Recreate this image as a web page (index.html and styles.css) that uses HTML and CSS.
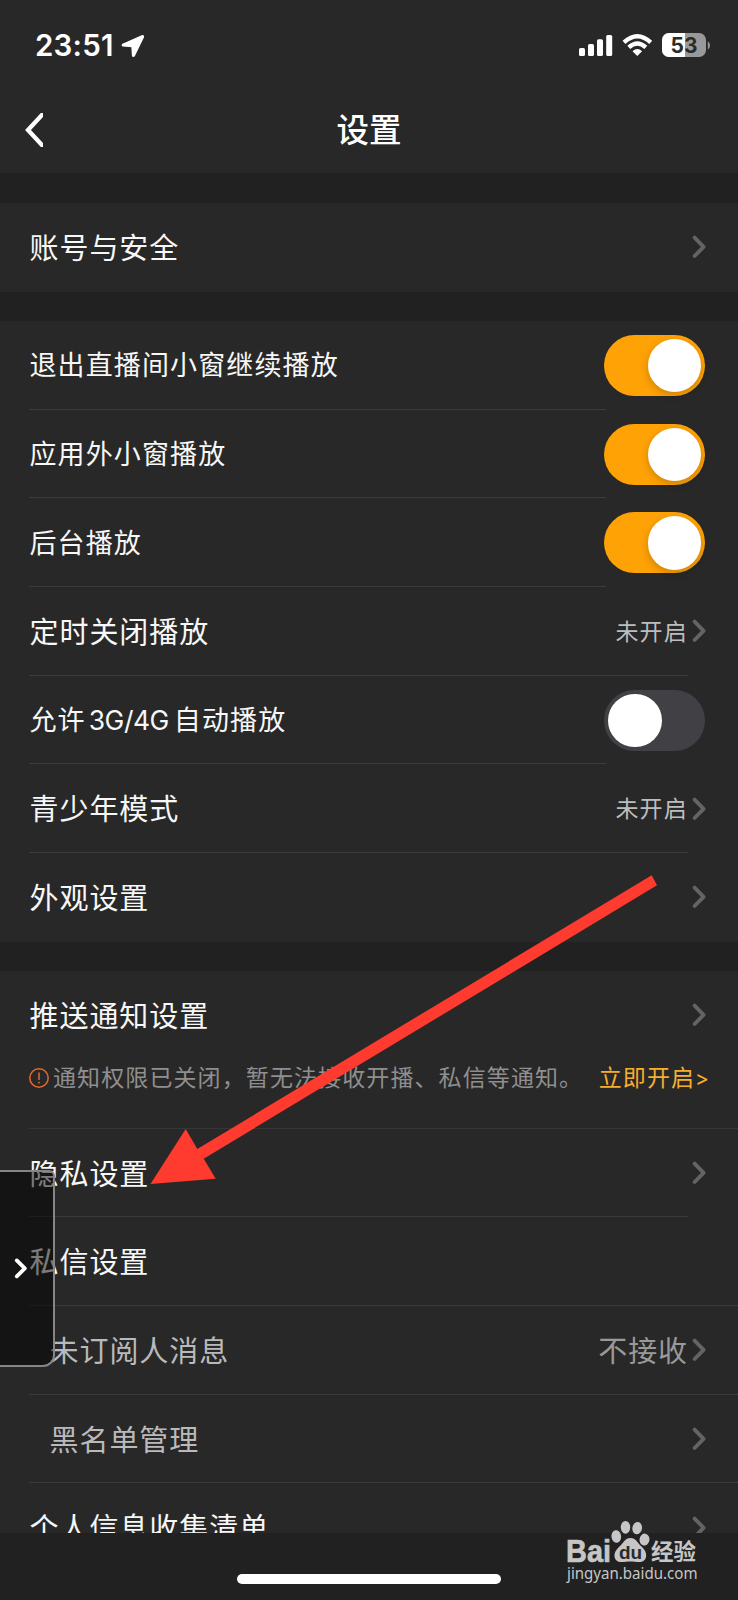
FILE: index.html
```html
<!DOCTYPE html>
<html lang="zh-CN">
<head>
<meta charset="utf-8">
<title>设置</title>
<link rel="stylesheet" href="styles.css">
</head>
<body>
<svg class="defs" width="0" height="0">
  <symbol id="chev" viewBox="0 0 14 24"><path d="M2.6 2.6 11.6 11.800 2.6 21" fill="none" stroke="#646467" stroke-width="3.8" stroke-linecap="round" stroke-linejoin="round"/></symbol>
</svg>
<div class="screen">
  <header class="top">
    <div class="status">
      <span class="time">23:51</span>
      <svg class="loc" width="24" height="24" viewBox="0 0 24 24"><path d="M21 1.800 1.800 10.300Q.8 11.400 2 11.900L11 12.500 11.600 21.600Q12.2 22.900 13.300 21.800L22.400 3Q22.400 1.300 21 1.800Z" fill="#fff" stroke="#fff" stroke-width="1.400" stroke-linejoin="round"/></svg>
      <svg class="signals" width="134" height="26" viewBox="578 32 134 26">
        <g fill="#fff">
          <rect x="579" y="48" width="6" height="8" rx="1.6"/>
          <rect x="588" y="44" width="6" height="12" rx="1.6"/>
          <rect x="597" y="39.3" width="6" height="16.7" rx="1.6"/>
          <rect x="606.2" y="35" width="6" height="21" rx="1.6"/>
          <path d="M637.3 56 632.5 51.3Q637.3 46.900 642.1 51.3Z"/>
        </g>
        <g fill="none" stroke="#fff" stroke-width="4.3">
          <path d="M624 42.400Q637.3 30 650.7 42.400"/>
          <path d="M628.8 47.3Q637.3 39.6 645.8 47.3"/>
        </g>
        <rect x="662" y="33" width="44" height="24" rx="7" fill="#999"/>
        <path d="M685 33H669a7 7 0 0 0-7 7v10a7 7 0 0 0 7 7h16Z" fill="#fff"/>
        <path d="M707.8 41.2Q710 42.5 710 45.3T707.8 49.5Z" fill="#999"/>
        <text class="pct" x="684" y="52.800" text-anchor="middle">53</text>
      </svg>
    </div>
    <div class="nav">
      <svg class="back" width="18" height="34" viewBox="0 0 18 34"><path d="M20-1.300 3 17 20 35.300" fill="none" stroke="#fff" stroke-width="4.300"/></svg>
      <h1 class="title">设置</h1>
    </div>
  </header>

  <main class="list">
    <section class="group first">
      <div class="row plain"><span class="name">账号与安全</span><svg class="chev"><use href="#chev"/></svg></div>
    </section>
    <section class="group">
      <div class="row short"><span class="name small">退出直播间小窗继续播放</span><span class="toggle on"><i class="knob"></i></span></div>
      <div class="row short"><span class="name small">应用外小窗播放</span><span class="toggle on"><i class="knob"></i></span></div>
      <div class="row short"><span class="name small">后台播放</span><span class="toggle on"><i class="knob"></i></span></div>
      <div class="row"><span class="name">定时关闭播放</span><span class="value">未开启</span><svg class="chev"><use href="#chev"/></svg></div>
      <div class="row short"><span class="name small">允许<span class="latin">3G/4G</span>自动播放</span><span class="toggle"><i class="knob"></i></span></div>
      <div class="row"><span class="name">青少年模式</span><span class="value">未开启</span><svg class="chev"><use href="#chev"/></svg></div>
      <div class="row plain"><span class="name">外观设置</span><svg class="chev"><use href="#chev"/></svg></div>
    </section>
    <section class="group">
      <div class="row plain"><span class="name">推送通知设置</span><svg class="chev"><use href="#chev"/></svg></div>
      <div class="hint">
        <svg class="warn" width="20" height="20" viewBox="0 0 20 20" fill="none" stroke="#e4692b" stroke-width="1.5"><circle cx="10" cy="10" r="9.2"/><path d="M10 4.5v7.5M10 13.7v1.8"/></svg>
        <span class="note">通知权限已关闭，暂无法接收开播、私信等通知。</span>
        <span class="open">立即开启<b class="gt">&gt;</b></span>
      </div>
      <div class="row"><span class="name">隐私设置</span><svg class="chev"><use href="#chev"/></svg></div>
      <div class="row full"><span class="name">私信设置</span></div>
      <div class="row full"><span class="name sub">未订阅人消息</span><span class="value big">不接收</span><svg class="chev"><use href="#chev"/></svg></div>
      <div class="row full"><span class="name sub">黑名单管理</span><svg class="chev"><use href="#chev"/></svg></div>
      <div class="row plain"><span class="name">个人信息收集清单</span><svg class="chev"><use href="#chev"/></svg></div>
    </section>
  </main>

  <footer class="bottom"><div class="home"></div></footer>

  <div class="drawer"><svg width="14" height="22" viewBox="0 0 14 22"><path d="M2.8 2.400 10.800 10.400 2.8 18.300" fill="none" stroke="#fff" stroke-width="3.8" stroke-linecap="round" stroke-linejoin="round"/></svg></div>

  <svg class="arrow" width="738" height="1600" viewBox="0 0 738 1600"><path d="M651.7 875.3 657 885.3 203.7 1158.7 215.7 1178.7 150.5 1184 185.7 1129 197.3 1149Z" fill="#ff3b30"/></svg>

  <svg class="mark" width="136" height="66" viewBox="564 1520 136 66">
    <g fill="#c6c6c6">
      <text class="bai" x="566" y="1561.500" textLength="45" lengthAdjust="spacingAndGlyphs">Bai</text>
      <ellipse cx="616.3" cy="1536.5" rx="4.8" ry="6.3" transform="rotate(-8 616.3 1536.5)"/>
      <ellipse cx="625.5" cy="1527.3" rx="4.7" ry="6.4"/>
      <ellipse cx="637.2" cy="1528.2" rx="4.8" ry="6.2" transform="rotate(10 637.2 1528.2)"/>
      <ellipse cx="644.5" cy="1539.6" rx="5" ry="6" transform="rotate(8 644.5 1539.6)"/>
      <path d="M630.5 1538C636 1538 637.5 1543 642 1547 646 1550.500 647.500 1556 645 1559.500 642 1563.500 636.500 1561.500 630.500 1561.500S619 1563.500 616 1560C612.800 1556 615 1550.500 619 1547 623.500 1543 625 1538 630.500 1538Z"/>
      <text class="jy" x="651" y="1559.500" textLength="45" lengthAdjust="spacingAndGlyphs">经验</text>
      <text class="url" x="567" y="1579" textLength="130.500" lengthAdjust="spacingAndGlyphs">jingyan.baidu.com</text>
    </g>
    <text class="du" x="630.500" y="1558.500" text-anchor="middle">du</text>
  </svg>
</div>
</body>
</html>
```

FILE: styles.css
```css
* { box-sizing: border-box; }
body { margin: 0; background: #212121; }
.defs { position: absolute; }
.screen {
  position: relative;
  width: 738px;
  height: 1600px;
  overflow: hidden;
  display: flex;
  flex-direction: column;
  background: #212121;
  color: #f7f7f7;
  font-family: "Noto Sans CJK SC", sans-serif;
}
.top { height: 173px; flex: none; background: #282828; }
.status { height: 86px; padding: 32px 26px 0 35px; display: flex; align-items: flex-start; }
.time {
  font: 600 29.500px/27px Inter, sans-serif;
  width: 77px;
  letter-spacing: 0.200px;
  white-space: nowrap;
  color: #fff;
}
.loc { margin: 2px 0 0 9px; }
.signals { margin-left: auto; }
.pct { font: 700 21px Inter, sans-serif; fill: #2b2b2b; }
.nav {
  height: 87px;
  padding-left: 25px;
  display: grid;
  grid-template-columns: 18px 1fr 43px;
  align-items: center;
}
.title {
  margin: 0;
  padding-bottom: 3px;
  text-align: center;
  font-size: 32.500px;
  font-weight: 500;
  line-height: 40px;
  color: #fff;
}
.list { flex: 1; min-height: 0; padding-top: 30px; overflow: hidden; }
.group { background: #282828; margin-bottom: 29.500px; }
.row {
  height: 88.650px;
  padding: 0 30px 0 29px;
  display: flex;
  align-items: center;
  background: linear-gradient(#3b3b3c, #3b3b3c) 29px 100% / 659px 1px no-repeat;
}
.row.short { background-size: 577px 1px; }
.row.full { background-size: 709px 1px; }
.row.plain { background: none; }
.name {
  margin-right: auto;
  padding: 0 0 3px 0.500px;
  font-size: 29px;
  letter-spacing: 0.950px;
  font-weight: 400;
  line-height: 40px;
  white-space: nowrap;
}
.name.small { font-size: 27px; letter-spacing: 1.120px; padding-bottom: 2px; }
.name.sub { padding-left: 20.500px; color: #bababa; }
.latin { font-family: Inter, sans-serif; font-size: 26.500px; letter-spacing: -0.500px; margin: 0 5px 0 3px; }
.value { font-size: 23px; letter-spacing: 1.200px; color: #bdbdbd; margin-right: 4px; padding-bottom: 3px; line-height: 40px; }
.value.big { font-size: 29px; letter-spacing: 0.900px; color: #999; margin-right: 4px; }
.chev { width: 14px; height: 24px; margin-right: 2px; flex: none; }
.toggle {
  width: 101px;
  height: 61px;
  margin-right: 3px;
  padding: 4px;
  border-radius: 31px;
  display: flex;
  background: #414045;
}
.toggle.on { background: #ffa206; justify-content: flex-end; }
.knob { width: 53.500px; height: 53.500px; border-radius: 50%; background: #fff; }
.toggle.on .knob { box-shadow: 0 3px 8px rgba(0, 0, 0, 0.2); }
.hint {
  height: 69px;
  padding: 0 29px 35px 29px;
  display: flex;
  align-items: center;
  font-size: 23px;
  line-height: 34px;
  letter-spacing: 1.100px;
  white-space: nowrap;
  color: #8f8f8f;
  background: linear-gradient(#363636, #363636) 29px 100% / 709px 1px no-repeat;
}
.warn { position: relative; top: 1px; }
.note { margin-left: 4px; padding-bottom: 2px; }
.open { margin-left: auto; padding-bottom: 2px; color: #f6ae2d; }
.gt { font: 400 21px Inter, sans-serif; letter-spacing: 0; }
.bottom { height: 67px; flex: none; padding-top: 41px; }
.home { width: 264px; height: 10px; margin: 0 auto; border-radius: 5px; background: #fff; }
.drawer {
  position: absolute;
  left: 0;
  top: 1170px;
  width: 55px;
  height: 197px;
  padding-left: 14px;
  display: flex;
  align-items: center;
  background: rgba(0, 0, 0, 0.500);
  border: 2px solid #858585;
  border-left: 0;
  border-radius: 0 6px 12px 0;
}
.arrow { position: absolute; left: 0; top: 0; }
.mark { position: absolute; left: 564px; top: 1520px; }
.bai { font: 700 30.500px "Liberation Sans", sans-serif; stroke: #c6c6c6; stroke-width: 0.600px; }
.du { font: 700 19px "Liberation Sans", sans-serif; fill: #2a2a2a; }
.jy { font: 700 22.500px "Noto Sans CJK SC", sans-serif; }
.url { font: 400 15.500px "Noto Sans", sans-serif; }
```
